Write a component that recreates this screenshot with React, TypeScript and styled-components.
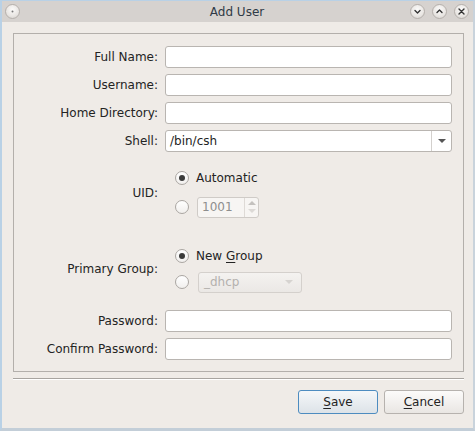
import React from "react";
import styled, { createGlobalStyle } from "styled-components";

const Global = createGlobalStyle`
  html, body { margin: 0; padding: 0; background: #efebe7; }
  body { font-family: "DejaVu Sans", "Liberation Sans", sans-serif; font-size: 12px; color: #232323; }
  * { box-sizing: border-box; }
`;

const Window = styled.div`
  width: 475px;
  height: 431px;
  display: flex;
  flex-direction: column;
  background: #efebe7;
  border-left: 2px solid #b9d1e6;
  border-right: 2px solid #c9d3dc;
  border-bottom: 3px solid #c3ced8;
  border-top: 1px solid #b9d1e6;
  overflow: hidden;
`;

const TitleBar = styled.div`
  height: 21px;
  flex: none;
  background: #d6d2cf;
  display: flex;
  align-items: center;
  padding: 0 4px 0 3px;
`;

const Title = styled.div`
  flex: 1;
  text-align: center;
  font-size: 12px;
  color: #2f3a46;
  padding-left: 44px;
`;

const TitleButtons = styled.div`
  display: flex;
  gap: 7px;
`;

const TitleBtn = styled.div`
  width: 15px;
  height: 15px;
  border-radius: 50%;
  background: radial-gradient(circle at 50% 35%, #fbfaf9 0%, #e9e6e3 60%, #d2ceca 100%);
  border: 1px solid #b5b0ac;
  display: flex;
  align-items: center;
  justify-content: center;
`;

const Content = styled.div`
  flex: 1;
  display: flex;
  flex-direction: column;
  padding: 11px 9px 0 11px;
`;

const GroupBox = styled.div`
  height: 339px;
  border: 1px solid #b3afab;
  padding: 12px 11px 0 0;
  display: flex;
  flex-direction: column;
`;

const Row = styled.div<{ $mt?: number }>`
  display: grid;
  grid-template-columns: 144px 1fr;
  column-gap: 7px;
  align-items: center;
  margin-top: ${(p) => p.$mt ?? 0}px;
`;

const Label = styled.div`
  text-align: right;
  white-space: nowrap;
`;

const TextInput = styled.div`
  height: 22px;
  background: #fff;
  border: 1px solid #b9b5b1;
  border-radius: 3px;
`;

const Combo = styled.div`
  height: 22px;
  background: #fff;
  border: 1px solid #b9b5b1;
  border-radius: 3px;
  display: flex;
  align-items: center;
`;

const ComboText = styled.div`
  flex: 1;
  padding-left: 4px;
`;

const ComboArrow = styled.div`
  width: 20px;
  height: 100%;
  border-left: 1px solid #d3d0cd;
  display: flex;
  align-items: center;
  justify-content: center;
`;

const Triangle = styled.div<{ $color: string; $up?: boolean }>`
  width: 0;
  height: 0;
  border-left: 4px solid transparent;
  border-right: 4px solid transparent;
  ${(p) => (p.$up ? `border-bottom: 4px solid ${p.$color};` : `border-top: 4px solid ${p.$color};`)}
`;

const Options = styled.div<{ $gap: number }>`
  display: flex;
  flex-direction: column;
  gap: ${(p) => p.$gap}px;
`;

const OptionRow = styled.div`
  height: 22px;
  display: flex;
  align-items: center;
  padding-left: 10px;
`;

const Radio = styled.div<{ $checked?: boolean }>`
  width: 14px;
  height: 14px;
  border-radius: 50%;
  border: 1px solid #aaa6a2;
  background: linear-gradient(#ffffff, #f1efed);
  display: flex;
  align-items: center;
  justify-content: center;
  margin-right: 7px;
  flex: none;
  &::after {
    content: "";
    display: ${(p) => (p.$checked ? "block" : "none")};
    width: 6px;
    height: 6px;
    border-radius: 50%;
    background: #3a3a3a;
  }
`;

const Spin = styled.div`
  width: 62px;
  height: 21px;
  margin-left: 1px;
  border: 1px solid #cfcbc7;
  border-radius: 3px;
  background: #f7f5f3;
  display: flex;
  align-items: center;
  color: #8e8e8e;
`;

const SpinText = styled.div`
  flex: 1;
  padding-left: 4px;
`;

const SpinButtons = styled.div`
  width: 14px;
  height: 100%;
  border-left: 1px solid #dedad6;
  display: flex;
  flex-direction: column;
  align-items: center;
  justify-content: space-evenly;
`;

const DisabledCombo = styled.div`
  width: 104px;
  height: 21px;
  margin-left: 2px;
  border: 1px solid #d4d0cc;
  border-radius: 3px;
  background: linear-gradient(#f4f2f0, #ebe8e5);
  display: flex;
  align-items: center;
  color: #b4b1ae;
  padding: 0 8px 0 5px;
  justify-content: space-between;
`;

const U = styled.span`
  text-decoration: underline;
  text-underline-offset: 2px;
`;

const Separator = styled.div`
  margin-top: 6px;
  height: 2px;
  border-top: 1px solid #a8a4a0;
  border-bottom: 1px solid #ffffff;
`;

const ButtonBar = styled.div`
  margin-top: 10px;
  display: flex;
  justify-content: flex-end;
  gap: 6px;
`;

const Button = styled.div<{ $default?: boolean }>`
  width: 80px;
  height: 24px;
  border-radius: 3px;
  display: flex;
  align-items: center;
  justify-content: center;
  color: #232323;
  border: 1px solid ${(p) => (p.$default ? "#4d8cc0" : "#b6b2ae")};
  background: ${(p) =>
    p.$default
      ? "linear-gradient(#f5f7f9, #dde3e8)"
      : "linear-gradient(#fcfbfa, #e9e6e3)"};
`;

const Glyph = ({ d }: { d: string }) => (
  <svg width="9" height="9" viewBox="0 0 9 9">
    <path d={d} fill="none" stroke="#333" strokeWidth="1.4" strokeLinecap="round" strokeLinejoin="round" />
  </svg>
);

export default function App() {
  return (
    <>
      <Global />
      <Window>
        <TitleBar>
          <TitleBtn>
            <svg width="3" height="3" viewBox="0 0 3 3">
              <circle cx="1.5" cy="1.5" r="1" fill="#777" />
            </svg>
          </TitleBtn>
          <Title>Add User</Title>
          <TitleButtons>
            <TitleBtn>
              <Glyph d="M2 3.5 L4.5 6 L7 3.5" />
            </TitleBtn>
            <TitleBtn>
              <Glyph d="M2 5.5 L4.5 3 L7 5.5" />
            </TitleBtn>
            <TitleBtn>
              <Glyph d="M2 2 L7 7 M7 2 L2 7" />
            </TitleBtn>
          </TitleButtons>
        </TitleBar>
        <Content>
          <GroupBox>
            <Row>
              <Label>Full Name:</Label>
              <TextInput />
            </Row>
            <Row $mt={6}>
              <Label>Username:</Label>
              <TextInput />
            </Row>
            <Row $mt={6}>
              <Label>Home Directory:</Label>
              <TextInput />
            </Row>
            <Row $mt={6}>
              <Label>Shell:</Label>
              <Combo>
                <ComboText>/bin/csh</ComboText>
                <ComboArrow>
                  <Triangle $color="#555" />
                </ComboArrow>
              </Combo>
            </Row>
            <Row $mt={15}>
              <Label>UID:</Label>
              <Options $gap={7}>
                <OptionRow>
                  <Radio $checked />
                  <span>Automatic</span>
                </OptionRow>
                <OptionRow>
                  <Radio />
                  <Spin>
                    <SpinText>1001</SpinText>
                    <SpinButtons>
                      <Triangle $color="#c4c1be" $up />
                      <Triangle $color="#dcd9d6" />
                    </SpinButtons>
                  </Spin>
                </OptionRow>
              </Options>
            </Row>
            <Row $mt={27}>
              <Label>Primary Group:</Label>
              <Options $gap={4}>
                <OptionRow>
                  <Radio $checked />
                  <span>
                    New <U>G</U>roup
                  </span>
                </OptionRow>
                <OptionRow>
                  <Radio />
                  <DisabledCombo>
                    <span>_dhcp</span>
                    <Triangle $color="#d6d3d0" />
                  </DisabledCombo>
                </OptionRow>
              </Options>
            </Row>
            <Row $mt={17}>
              <Label>Password:</Label>
              <TextInput />
            </Row>
            <Row $mt={6}>
              <Label>Confirm Password:</Label>
              <TextInput />
            </Row>
          </GroupBox>
          <Separator />
          <ButtonBar>
            <Button $default>
              <span>
                <U>S</U>ave
              </span>
            </Button>
            <Button>
              <span>
                <U>C</U>ancel
              </span>
            </Button>
          </ButtonBar>
        </Content>
      </Window>
    </>
  );
}
